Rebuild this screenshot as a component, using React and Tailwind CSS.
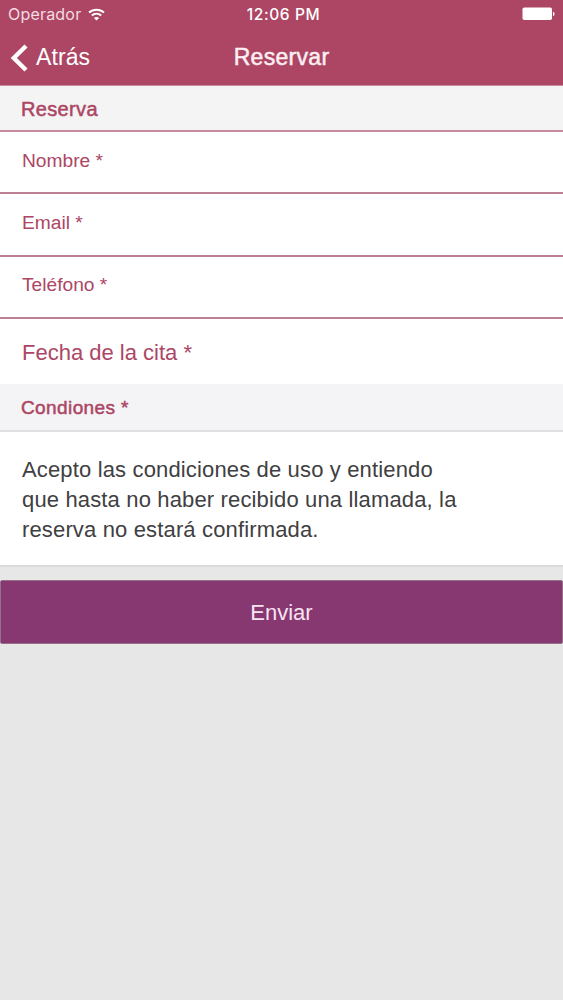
import React, { useState } from "react";

const fields = [
  { name: "nombre", label: "Nombre *", type: "text" },
  { name: "email", label: "Email *", type: "email" },
  { name: "telefono", label: "Teléfono *", type: "tel" },
];

const StatusBar = () => (
  <div className="grid h-[28px] grid-cols-3 items-center pl-2 pr-2 font-['Inter',sans-serif] text-white">
    <div className="flex items-center gap-[7px]">
      <span className="text-[16px] leading-none tracking-[0.2px] text-[#f3dbe2]">Operador</span>
      <svg width="17" height="13" viewBox="0 0 17 13" fill="none" stroke="#fff" strokeWidth="2">
        <path d="M1 4.6C5.2.7 11.8.7 16 4.6" />
        <path d="M3.8 7.6c2.7-2.4 6.7-2.4 9.4 0" />
        <path d="M8.5 12.6 5.9 10c1.4-1.3 3.8-1.3 5.2 0z" fill="#fff" stroke="none" />
      </svg>
    </div>
    <span className="pl-1 pt-[2px] text-center text-[15.5px] font-medium leading-none tracking-[0.6px] whitespace-nowrap">
      12:06 PM
    </span>
    <div className="flex justify-end">
      <svg width="33" height="14" viewBox="0 0 33 14" fill="#fff">
        <rect x="0.5" y="0.5" width="29.5" height="12.5" rx="1.8" />
        <path d="M31 4.8c2 .5 2 3.7 0 4.2z" />
      </svg>
    </div>
  </div>
);

const App = () => {
  const [form, setForm] = useState({ nombre: "", email: "", telefono: "" });

  const handleChange = (e) => {
    setForm({ ...form, [e.target.name]: e.target.value });
  };

  return (
    <div className="min-h-[1000px] w-full bg-[#e8e7e8] font-['Liberation_Sans',Arial,sans-serif] text-[#ac4664]">
      {/* Header */}
      <header className="h-[86px] border-b border-[#c98a9c] bg-[#ac4664] text-white">
        <StatusBar />
        <div className="grid h-[57px] grid-cols-3 items-center pt-[2px]">
          <button className="flex items-center pl-[10px] text-left">
            <svg width="18" height="28" viewBox="0 0 18 28" fill="none" stroke="#fff" strokeWidth="4.4">
              <path d="M16 2 3.8 14 16 26" />
            </svg>
            <span className="ml-2 text-[23px] leading-none tracking-[0.1px]">Atrás</span>
          </button>
          <h1 className="text-center text-[23px] leading-none tracking-[0.3px] text-[#fdeff3] [-webkit-text-stroke:0.5px_#fdeff3]">
            Reservar
          </h1>
        </div>
      </header>

      {/* Form */}
      <form onSubmit={(e) => e.preventDefault()}>
        <h2 className="flex h-[46px] items-center border-b-2 border-[#c58a9d] bg-[#f4f4f4] pl-[21px] pt-px text-[20px] tracking-[0.35px] [-webkit-text-stroke:0.5px_#ac4664]">
          Reserva
        </h2>
        {fields.map((field) => (
          <div
            key={field.name}
            className="flex h-[62.33px] items-center border-b-2 border-[#bd7f92] bg-white pb-0.5 pl-[22px]"
          >
            <input
              name={field.name}
              type={field.type}
              placeholder={field.label}
              value={form[field.name]}
              onChange={handleChange}
              className="w-full text-[19.2px] outline-none placeholder:text-[#ac4664]"
            />
          </div>
        ))}
        <div className="flex h-[65px] items-center bg-white pl-[22px] pt-[2px] text-[22px]">
          Fecha de la cita *
        </div>
        <h2 className="flex h-[48px] items-center border-b-2 border-[#dfdee0] bg-[#f4f3f6] pl-[21px] pt-[2px] text-[19px] tracking-[0.4px] [-webkit-text-stroke:0.5px_#ac4664]">
          Condiones *
        </h2>
        <div className="h-[135px] border-b-2 border-[#dadada] bg-white pl-[22px] pt-[23px]">
          <p className="text-[22px] leading-[30px] tracking-[0.15px] text-[#404042]">
            Acepto las condiciones de uso y entiendo
            <br />
            que hasta no haber recibido una llamada, la
            <br />
            reserva no estará confirmada.
          </p>
        </div>
        <button
          type="submit"
          className="mt-[13px] block h-[64px] w-full rounded-[2px] border-[1.5px] border-[#94708a] bg-[#873871] pt-[2px] text-[22px] text-[#f8e3f3]"
        >
          Enviar
        </button>
      </form>
    </div>
  );
};

export default App;
